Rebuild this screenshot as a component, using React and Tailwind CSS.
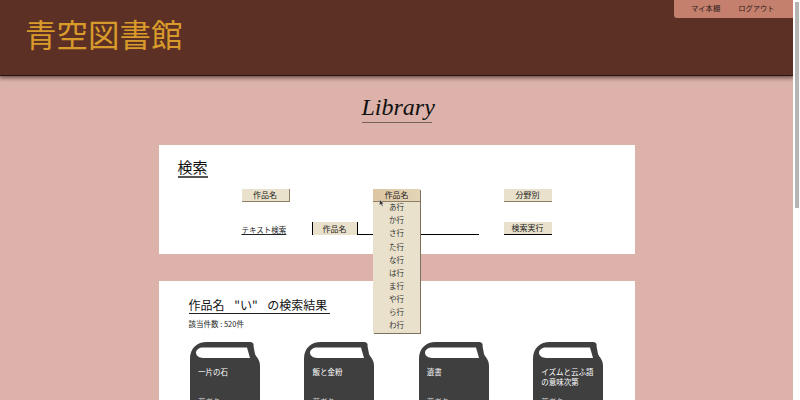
const gyo = ['あ行', 'か行', 'さ行', 'た行', 'な行', 'は行', 'ま行', 'や行', 'ら行', 'わ行']

const books = [
  { title: ['一片の石'], author: '著者名' },
  { title: ['飯と金粉'], author: '著者名' },
  { title: ['遺書'], author: '著者名' },
  { title: ['イズムと云ふ語', 'の意味次第'], author: '著者名' },
]

function BeigeButton({ children, className = '' }) {
  return (
    <button className={`flex h-[13px] items-center justify-center bg-[#e9e1cb] text-[8px] leading-none text-[#222] ${className}`}>
      {children}
    </button>
  )
}

function Book({ book }) {
  return (
    <div className="relative h-[100px] w-[70px] text-white">
      <svg className="absolute inset-0" width="70" height="100" viewBox="0 0 70 100">
        <path d="M0 17C0 6 7 0 17 0H60C63 0 64 2 63.500 4L65 12C66 15 70 17 70 24V100H0Z" fill="#3f3f3f" />
        <path d="M13 5.500H57L60 16H13C9.500 16 6 14 6 10.800C6 7.500 9.500 5.500 13 5.500Z" fill="#fff" />
      </svg>
      <div className="relative px-2 pt-[25px] text-[7.500px] leading-[10px]">
        {book.title.map((line) => (
          <div key={line} className="whitespace-nowrap">{line}</div>
        ))}
      </div>
      <div className="absolute left-2 top-[56px] text-[7.500px] leading-none text-[#ccc]">{book.author}</div>
    </div>
  )
}

export default function App() {
  return (
    <div className="flex h-[400px] w-[800px] overflow-hidden bg-white font-['Noto_Sans_CJK_JP','Liberation_Sans',sans-serif]">
      <main className="relative h-[400px] w-[793px] shrink-0 overflow-hidden bg-[#dcb2aa]">
        <header className="relative flex h-[75px] items-start justify-between bg-[#5c3025] shadow-[0_1px_0_#2a1610,0_2px_4px_1px_rgba(50,25,20,0.65)]">
          <h1 className="pl-[25px] pt-[10px] text-[31.500px] font-normal leading-[46px] text-[#d89a2a]">青空図書館</h1>
          <nav className="flex h-[18px] w-[119px] items-center gap-[18px] rounded-bl-[3px] bg-[#c47f6d] pl-[17px] text-[7.300px] leading-none text-[#2a1a16]">
            <span>マイ本棚</span>
            <span>ログアウト</span>
          </nav>
        </header>

        <div className="flex justify-center pt-[18px]">
          <h2 className="w-[70px] border-b border-[#77605c] text-center font-['Liberation_Serif',serif] text-[24px] italic leading-[29px] text-[#111]">
            Library
          </h2>
        </div>

        <section className="relative mx-auto mt-[22px] h-[109px] w-[476px] bg-white">
          <h3 className="absolute left-[19px] top-[12px] border-b-2 border-[#555] text-[15px] leading-[19px] text-[#111]">検索</h3>
          <div className="pl-[83px] pt-[44px]">
            <div className="flex gap-[83px]">
              <BeigeButton className="w-12 border-b border-r border-[#8d7f68]">作品名</BeigeButton>
              <div className="w-12" />
              <BeigeButton className="w-12 border-b border-[#8d7f68]">分野別</BeigeButton>
            </div>
            <div className="mt-5 flex items-end gap-[25px]">
              <span className="w-[45px] whitespace-nowrap text-[7.500px] leading-[11px] text-[#222] underline">テキスト検索</span>
              <div className="h-[13px] w-[167px] border-b border-black">
                <BeigeButton className="box-border h-[12px] w-[46px] border-x border-black">作品名</BeigeButton>
              </div>
              <BeigeButton className="w-12 border-b border-black">検索実行</BeigeButton>
            </div>
          </div>
        </section>

        <section className="mx-auto mt-[27px] h-[130px] w-[476px] bg-white pl-[30px] pt-[16px]">
          <h3 className="w-[141px] whitespace-nowrap border-b border-[#222] text-[12px] leading-[16px] text-[#111] [word-spacing:7px]">作品名 "い" の検索結果</h3>
          <p className="mt-[4px] text-[7.500px] leading-[12px] text-[#222]">該当件数 : 520件</p>
          <div className="ml-[1.500px] mt-[12px] flex gap-[44.400px]">
            {books.map((book) => <Book key={book.title[0]} book={book} />)}
          </div>
        </section>

        {/* open dropdown, sits over both panels */}
        <div className="absolute left-[373px] top-[189px] w-[47px] bg-[#e9e1cb] shadow-[1px_1px_0_#7d705c]">
          <div className="relative z-10 flex h-[13px] items-center justify-center border-b border-[#8d7f68] bg-gradient-to-r from-[#dcc6a2] to-[#e4d5b8] text-[8px] leading-none text-[#222]">作品名</div>
          <ul className="-mt-[1.500px] pb-[1.500px]">
            {gyo.map((g) => (
              <li key={g} className="relative z-20 flex h-[13.100px] items-center justify-center text-[7.500px] leading-none text-[#333]">{g}</li>
            ))}
          </ul>
        </div>

        {/* mouse pointer */}
        <svg className="absolute left-[379px] top-[199px] z-30" width="6" height="8" viewBox="0 0 6 8">
          <path d="M0.500 0.500V6.500L2 5.200L3.200 7.500L4.200 7L3 4.800H5Z" fill="#333" stroke="#fff" strokeWidth="0.400" />
        </svg>
      </main>

      <div className="flex-1 bg-white pl-[2px] pt-[2px]">
        <div className="h-[206px] w-[4px] bg-[#b5b5b5]" />
      </div>
    </div>
  )
}
